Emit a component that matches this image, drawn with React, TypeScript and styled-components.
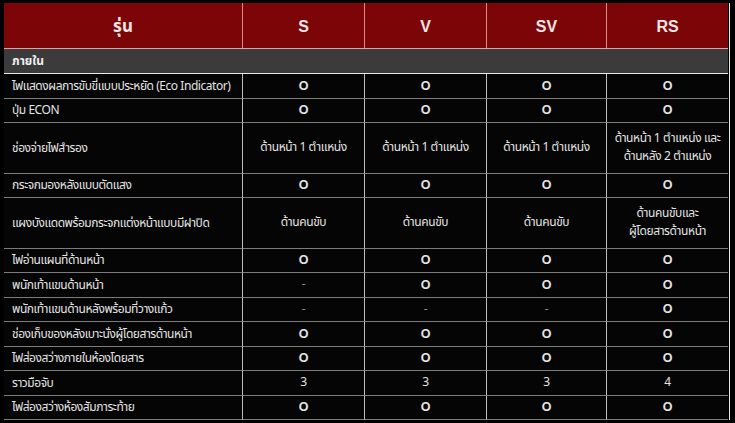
import styled, { createGlobalStyle } from 'styled-components';

type Row = { label: string; values: string[]; tall?: boolean };

const models = ['S', 'V', 'SV', 'RS'];

const rows: Row[] = [
    { label: 'ไฟแสดงผลการขับขี่แบบประหยัด (Eco Indicator)', values: ['O', 'O', 'O', 'O'] },
    { label: 'ปุ่ม ECON', values: ['O', 'O', 'O', 'O'] },
    {
        label: 'ช่องจ่ายไฟสำรอง',
        values: ['ด้านหน้า 1 ตำแหน่ง', 'ด้านหน้า 1 ตำแหน่ง', 'ด้านหน้า 1 ตำแหน่ง', 'ด้านหน้า 1 ตำแหน่ง และ\nด้านหลัง 2 ตำแหน่ง'],
        tall: true,
    },
    { label: 'กระจกมองหลังแบบตัดแสง', values: ['O', 'O', 'O', 'O'] },
    {
        label: 'แผงบังแดดพร้อมกระจกแต่งหน้าแบบมีฝาปิด',
        values: ['ด้านคนขับ', 'ด้านคนขับ', 'ด้านคนขับ', 'ด้านคนขับและ\nผู้โดยสารด้านหน้า'],
        tall: true,
    },
    { label: 'ไฟอ่านแผนที่ด้านหน้า', values: ['O', 'O', 'O', 'O'] },
    { label: 'พนักเท้าแขนด้านหน้า', values: ['-', 'O', 'O', 'O'] },
    { label: 'พนักเท้าแขนด้านหลังพร้อมที่วางแก้ว', values: ['-', '-', '-', 'O'] },
    { label: 'ช่องเก็บของหลังเบาะนั่งผู้โดยสารด้านหน้า', values: ['O', 'O', 'O', 'O'] },
    { label: 'ไฟส่องสว่างภายในห้องโดยสาร', values: ['O', 'O', 'O', 'O'] },
    { label: 'ราวมือจับ', values: ['3', '3', '3', '4'] },
    { label: 'ไฟส่องสว่างห้องสัมภาระท้าย', values: ['O', 'O', 'O', 'O'] },
];

const GlobalStyle = createGlobalStyle`
    html, body {
        margin: 0;
        background: #000;
    }
    body {
        font-family: "Noto Sans Thai", "Noto Sans", "DejaVu Sans", sans-serif;
    }
`;

const Page = styled.div`
    padding: 3px 0 0 4px;
    width: 735px;
    height: 423px;
    box-sizing: border-box;
    overflow: hidden;
    background: #000;
`;

const SpecGrid = styled.div`
    display: grid;
    grid-template-columns: 239px 122px 122px 120px 121px;
    width: 725px;
    border-right: 1px solid #e6e6e6;
`;

const HeadCell = styled.div<{ $first?: boolean; $last?: boolean }>`
    height: 46px;
    box-sizing: border-box;
    display: flex;
    align-items: center;
    justify-content: center;
    padding-top: 2px;
    background: #7c0508;
    color: #f2e6e6;
    font-family: "Liberation Sans", "Noto Sans Thai", sans-serif;
    font-weight: 700;
    font-size: ${({ $first }) => ($first ? '17px' : '16px')};
    border-right: ${({ $last }) => ($last ? 'none' : '1px solid #d98a8a')};
    border-bottom: 1px solid #e5a0a0;
`;

const SectionRow = styled.div`
    grid-column: 1 / -1;
    height: 25px;
    box-sizing: border-box;
    display: flex;
    align-items: center;
    padding-left: 8px;
    background: #3b3b3b;
    color: #f0f0f0;
    font-weight: 700;
    font-size: 12px;
    border-bottom: 1px solid #e8e8e8;
`;

const LabelCell = styled.div<{ $tall?: boolean }>`
    height: ${({ $tall }) => ($tall ? '50.5px' : '24.5px')};
    box-sizing: border-box;
    display: flex;
    align-items: center;
    padding-left: 8px;
    background: #050505;
    color: #e4e4e4;
    font-size: 12px;
    letter-spacing: -0.45px;
    white-space: nowrap;
    border-right: 1px solid #bdbdbd;
    border-bottom: 1px solid #7c7c7c;
`;

const ValueCell = styled.div<{ $tall?: boolean; $mark?: boolean; $dash?: boolean; $last?: boolean }>`
    height: ${({ $tall }) => ($tall ? '50.5px' : '24.5px')};
    box-sizing: border-box;
    display: flex;
    align-items: center;
    justify-content: center;
    text-align: center;
    white-space: pre-line;
    line-height: 1.45;
    background: #050505;
    color: ${({ $dash }) => ($dash ? '#8c8c8c' : '#e4e4e4')};
    font-family: ${({ $mark }) => ($mark ? '"Liberation Sans", sans-serif' : 'inherit')};
    font-weight: ${({ $mark }) => ($mark ? 700 : 400)};
    font-size: ${({ $mark }) => ($mark ? '12.5px' : '12px')};
    letter-spacing: ${({ $mark }) => ($mark ? '0' : '-0.4px')};
    border-right: ${({ $last }) => ($last ? 'none' : '1px solid #bdbdbd')};
    border-bottom: 1px solid #7c7c7c;
`;

export default function App() {
    return (
        <>
            <GlobalStyle />
            <Page>
                <SpecGrid>
                    <HeadCell $first>รุ่น</HeadCell>
                    {models.map((m, i) => (
                        <HeadCell key={m} $last={i === models.length - 1}>
                            {m}
                        </HeadCell>
                    ))}
                    <SectionRow>ภายใน</SectionRow>
                    {rows.map((row) => [
                        <LabelCell key={row.label} $tall={row.tall}>
                            {row.label}
                        </LabelCell>,
                        ...row.values.map((v, i) => (
                            <ValueCell
                                key={`${row.label}-${i}`}
                                $tall={row.tall}
                                $mark={v === 'O'}
                                $dash={v === '-'}
                                $last={i === row.values.length - 1}
                            >
                                {v}
                            </ValueCell>
                        )),
                    ])}
                </SpecGrid>
            </Page>
        </>
    );
}
